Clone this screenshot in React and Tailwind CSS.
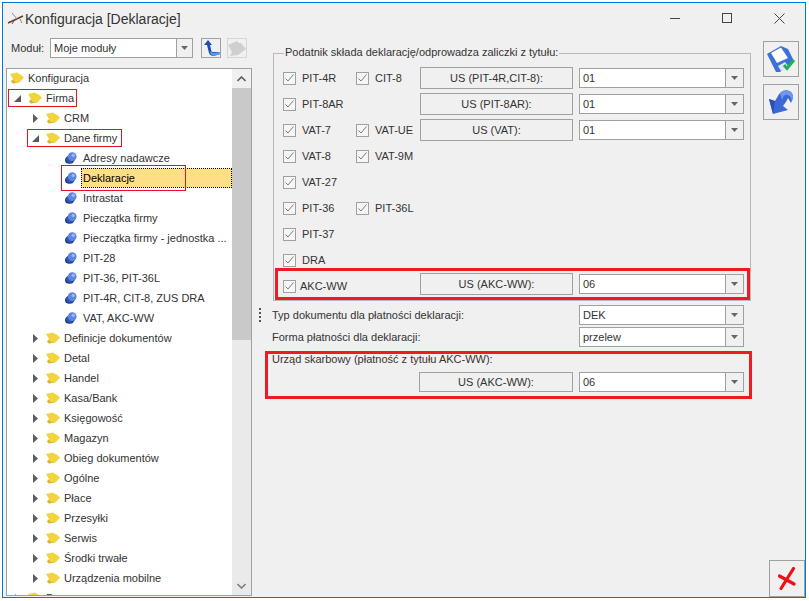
import React from 'react';

const font = { fontFamily: '"Liberation Sans", sans-serif' };

const Folder = () => (
  <svg width="14" height="12" viewBox="0 0 14 12" className="shrink-0">
    <path d="M0 2 L7 0.5 L9 2 L10 2 L14 5.5 L10 10 L3 11.5 L1 9.5 L3 7 Z" fill="#f2d53c" />
    <path d="M1 9.5 L3 7.5 L5 10 L10 10 L3 11.5 Z" fill="#d9b52c" />
  </svg>
);

const Leaf = () => (
  <svg width="12" height="12" viewBox="0 0 12 12" className="shrink-0">
    <ellipse cx="4.5" cy="8.2" rx="4.5" ry="3.6" fill="#1f3f8f" />
    <ellipse cx="5.5" cy="6.8" rx="4.5" ry="3.6" fill="#2f55b5" />
    <circle cx="7.2" cy="4.6" r="4.4" fill="#5c86e0" />
    <circle cx="8.2" cy="3.4" r="1.7" fill="#9db9f2" />
  </svg>
);

const Collapsed = () => (
  <svg width="5" height="9" viewBox="0 0 5 9" className="ml-[5px]">
    <path d="M0 0 L5 4.5 L0 9 Z" fill="#5f5f5f" />
  </svg>
);

const Expanded = () => (
  <svg width="7" height="7" viewBox="0 0 7 7" className="ml-[4px]">
    <path d="M7 0 L7 7 L0 7 Z" fill="#5a5a5a" />
  </svg>
);

const Caret = () => (
  <svg width="7" height="4" viewBox="0 0 7 4">
    <path d="M0 0 L7 0 L3.5 4 Z" fill="#666" />
  </svg>
);

const tree = [
  { label: 'Konfiguracja', pad: 'pl-[3px]', type: 'root' },
  { label: 'Firma', pad: 'pl-[3px]', type: 'open', mark: 'left-[1px] top-[1px] w-[69px] h-[18px]' },
  { label: 'CRM', pad: 'pl-[21px]', type: 'closed' },
  { label: 'Dane firmy', pad: 'pl-[21px]', type: 'open', mark: 'left-[20px] top-[1px] w-[95px] h-[18px]' },
  { label: 'Adresy nadawcze', type: 'leaf' },
  { label: 'Deklaracje', type: 'leaf', selected: true, mark: 'left-[54px] -top-[3px] w-[125px] h-[26px]' },
  { label: 'Intrastat', type: 'leaf' },
  { label: 'Pieczątka firmy', type: 'leaf' },
  { label: 'Pieczątka firmy - jednostka ...', type: 'leaf' },
  { label: 'PIT-28', type: 'leaf' },
  { label: 'PIT-36, PIT-36L', type: 'leaf' },
  { label: 'PIT-4R, CIT-8, ZUS DRA', type: 'leaf' },
  { label: 'VAT, AKC-WW', type: 'leaf' },
  { label: 'Definicje dokumentów', pad: 'pl-[21px]', type: 'closed' },
  { label: 'Detal', pad: 'pl-[21px]', type: 'closed' },
  { label: 'Handel', pad: 'pl-[21px]', type: 'closed' },
  { label: 'Kasa/Bank', pad: 'pl-[21px]', type: 'closed' },
  { label: 'Księgowość', pad: 'pl-[21px]', type: 'closed' },
  { label: 'Magazyn', pad: 'pl-[21px]', type: 'closed' },
  { label: 'Obieg dokumentów', pad: 'pl-[21px]', type: 'closed' },
  { label: 'Ogólne', pad: 'pl-[21px]', type: 'closed' },
  { label: 'Płace', pad: 'pl-[21px]', type: 'closed' },
  { label: 'Przesyłki', pad: 'pl-[21px]', type: 'closed' },
  { label: 'Serwis', pad: 'pl-[21px]', type: 'closed' },
  { label: 'Środki trwałe', pad: 'pl-[21px]', type: 'closed' },
  { label: 'Urządzenia mobilne', pad: 'pl-[21px]', type: 'closed' },
  { label: 'Program', pad: 'pl-[3px]', type: 'closed' },
];

const TreeRow = ({ row }) => {
  if (row.type === 'leaf') {
    return (
      <div className="relative flex h-5 items-center whitespace-nowrap pl-[58px]">
        <span className="w-[16px] shrink-0"><Leaf /></span>
        <span
          className={
            row.selected
              ? 'flex h-5 flex-1 items-center border border-dotted border-black bg-[#fddf85] pl-[1px] text-black'
              : 'pl-[2px]'
          }
        >
          {row.label}
        </span>
        {row.mark && <span className={`absolute border border-[#e81123] ${row.mark}`} />}
      </div>
    );
  }
  return (
    <div className={`relative flex h-5 items-center whitespace-nowrap ${row.pad}`}>
      {row.type !== 'root' && (
        <span className="flex w-[18px] shrink-0 items-center">
          {row.type === 'open' ? <Expanded /> : <Collapsed />}
        </span>
      )}
      <span className="w-[18px] shrink-0"><Folder /></span>
      <span>{row.label}</span>
      {row.mark && <span className={`absolute border border-[#e81123] ${row.mark}`} />}
    </div>
  );
};

const Combo = ({ value, className = 'h-5' }) => (
  <div className={`flex w-[165px] shrink-0 items-center border border-[#a0a0a0] bg-white ${className}`}>
    <span className="flex-1 pl-[3px]">{value}</span>
    <span className="flex h-full w-[18px] items-center justify-center border-l border-[#a0a0a0] bg-[#f0f0f0]">
      <Caret />
    </span>
  </div>
);

const Check = ({ label, className = 'w-[73px]', labelClass = 'ml-[6px]' }) => (
  <label className={`flex shrink-0 items-center ${className}`}>
    <span className="flex h-[13px] w-[13px] items-center justify-center border border-[#a0a0a0] bg-[#f6f6f6]">
      <svg width="9" height="8" viewBox="0 0 9 8">
        <path d="M0.5 4.5 L3 7 L8.5 0.5" fill="none" stroke="#7d7d7d" strokeWidth="1" />
      </svg>
    </span>
    <span className={labelClass}>{label}</span>
  </label>
);

const UsButton = ({ children, className = 'h-[22px] w-[153px]' }) => (
  <div className={`flex shrink-0 items-center justify-center border border-[#a0a0a0] bg-[#f0f0f0] ${className}`}>
    {children}
  </div>
);

const checkRows = [
  { a: 'PIT-4R', b: 'CIT-8', us: 'US (PIT-4R,CIT-8):', val: '01' },
  { a: 'PIT-8AR', us: 'US (PIT-8AR):', val: '01' },
  { a: 'VAT-7', b: 'VAT-UE', us: 'US (VAT):', val: '01' },
  { a: 'VAT-8', b: 'VAT-9M' },
  { a: 'VAT-27' },
  { a: 'PIT-36', b: 'PIT-36L' },
  { a: 'PIT-37' },
  { a: 'DRA' },
];

const SaveIcon = () => (
  <svg width="30" height="28" viewBox="0 0 30 28">
    <path d="M1 9 L15 1 L22 4 L28 16 L22 20 L14 27 L10 27 Z" fill="#3d6fd8" />
    <path d="M5 8 L15 2.5 L22 13 L11 18 Z" fill="#ffffff" />
    <path d="M12 21 L19 17 L22 21 L15 26 Z" fill="#dfe8f8" />
    <path d="M18 20 L21 23.5 L28 15" fill="none" stroke="#22b14c" strokeWidth="3" />
  </svg>
);

const UndoIcon = () => (
  <svg width="26" height="26" viewBox="0 0 26 26">
    <path d="M1 10 L5 25 L20 21 L15 17 C17 14 19 12 20 9 L23 14 C25 10 26 6 23 3 C19 0 15 1 12 4 C10 6 9 9 7 12 Z" fill="#3c68d6" />
    <path d="M12 4 C15 1 19 0 23 3 C25 5 26 8 24 12 C23 7 20 5 17 6 C15 7 15 9 14 11 Z" fill="#6f97ec" />
    <path d="M1 10 L5 25 L7 12 Z" fill="#2c50b0" />
  </svg>
);

const CancelIcon = () => (
  <svg width="18" height="23" viewBox="0 0 18 23">
    <path d="M1.5 9 L16 17 M15.5 1.5 L3 21.5" stroke="#ed1016" strokeWidth="3.2" strokeLinecap="round" fill="none" />
  </svg>
);

const BackIcon = () => (
  <svg width="17" height="17" viewBox="0 0 17 17">
    <path d="M5 0 L1 5 L4 5 L6 13 Q7 16 11 16 L17 14 L16 12 L10 12 Q8 12 8 9 L7 5 L9 5 Z" fill="#1d4fb3" />
    <path d="M8 11 Q9 13 11 13 L17 12 L17 14 L11 16 Q8 15 7 13 Z" fill="#5d9bef" />
  </svg>
);

const DisabledIcon = () => (
  <svg width="18" height="15" viewBox="0 0 18 15">
    <path d="M0 4 L9 0 L11 2 L13 2 L18 8 L10 14 L2 15 L4 11 Z" fill="#cfcfcf" />
  </svg>
);

const TitleIcon = () => (
  <svg width="17" height="14" viewBox="0 0 17 14" className="mt-[1px]">
    <path d="M1 11 L16 4" stroke="#6b3b2a" strokeWidth="1.6" />
    <path d="M5 1 L10 7 M13 7 L15 11" stroke="#8a8a8a" strokeWidth="1" />
    <path d="M5 12 L7 9" stroke="#555" strokeWidth="1" />
  </svg>
);

export default function App() {
  return (
    <div className="h-[601px] w-[809px] overflow-hidden bg-white pb-[3px] pl-[2px] pr-[3px] pt-[2px] text-[11px] leading-[12px] text-[#333]" style={font}>
      <div className="flex h-full flex-col border border-[#0078d7] bg-[#f0f0f0]">
        {/* Title bar */}
        <div className="flex h-[30px] shrink-0 items-center pl-[4px]">
          <TitleIcon />
          <span className="ml-[1px] mt-[1px] text-[14px] text-[#333]">Konfiguracja [Deklaracje]</span>
          <div className="ml-auto flex items-center">
            <span className="flex w-[52px] justify-center"><span className="h-px w-[10px] bg-[#444]" /></span>
            <span className="flex w-[52px] justify-center"><span className="h-[10px] w-[10px] border border-[#444]" /></span>
            <span className="flex w-[52px] justify-center">
              <svg width="11" height="11" viewBox="0 0 11 11">
                <path d="M0.5 0.5 L10.5 10.5 M10.5 0.5 L0.5 10.5" stroke="#444" strokeWidth="1" />
              </svg>
            </span>
          </div>
        </div>

        <div className="flex min-h-0 flex-1">
          {/* Left column */}
          <div className="flex w-[253px] shrink-0 flex-col pl-[3px] pr-[4px]">
            <div className="flex h-[35px] shrink-0 items-start pt-[5px]">
              <span className="ml-[5px] mt-[4px] w-[39px]">Moduł:</span>
              <div className="flex h-5 w-[143px] items-center border border-[#a0a0a0] bg-white">
                <span className="flex-1 pl-[3px]">Moje moduły</span>
                <span className="flex h-full w-[16px] items-center justify-center border-l border-[#a0a0a0] bg-[#f0f0f0]"><Caret /></span>
              </div>
              <span className="ml-[8px] flex h-5 w-5 items-center justify-center border border-[#a0a0a0]"><BackIcon /></span>
              <span className="ml-[6px] flex h-5 w-5 items-center justify-center border border-[#d5d5d5]"><DisabledIcon /></span>
            </div>
            <div className="mb-[1px] flex min-h-0 flex-1 border border-[#a0a0a0] bg-white">
              <div className="min-w-0 flex-1 overflow-hidden">
                <div className="-mt-[1px]">
                  {tree.map((row) => <TreeRow key={row.label} row={row} />)}
                </div>
              </div>
              <div className="flex w-[19px] shrink-0 flex-col bg-[#eaeaea]">
                <span className="flex h-[19px] shrink-0 items-center justify-center bg-[#f0f0f0]">
                  <svg width="9" height="6" viewBox="0 0 9 6"><path d="M0.5 5 L4.5 1 L8.5 5" fill="none" stroke="#606060" strokeWidth="1.6" /></svg>
                </span>
                <span className="h-[252px] shrink-0 bg-[#c9c9c9]" />
                <span className="mt-auto flex h-[19px] shrink-0 items-center justify-center">
                  <svg width="9" height="6" viewBox="0 0 9 6"><path d="M0.5 1 L4.5 5 L8.5 1" fill="none" stroke="#808080" strokeWidth="1.6" /></svg>
                </span>
              </div>
            </div>
          </div>

          {/* Right panel */}
          <div className="flex w-[507px] shrink-0 flex-col">
            <fieldset className="ml-[17px] mt-[12px] w-[478px] border border-[#b9b9b9] pt-[4px]">
              <legend className="ml-[10px] h-4 px-[1px] leading-[14px]">Podatnik składa deklarację/odprowadza zaliczki z tytułu:</legend>
              {checkRows.map((r) => (
                <div key={r.a} className="flex h-[26px] items-center pl-[9px]">
                  <Check label={r.a} />
                  {r.b ? <Check label={r.b} className="w-[64px]" /> : <span className="w-[64px] shrink-0" />}
                  {r.us && <UsButton>{r.us}</UsButton>}
                  {r.val && <div className="ml-[6px]"><Combo value={r.val} /></div>}
                </div>
              ))}
              <div className="-mt-[5px] ml-[1px] flex h-[32px] w-[475px] items-center border-[3px] border-[#ed1c24] pl-[5px]">
                <Check label="AKC-WW" className="w-[137px] pt-[4px]" labelClass="ml-[4px]" />
                <UsButton>US (AKC-WW):</UsButton>
                <div className="ml-[6px]"><Combo value="06" /></div>
              </div>
            </fieldset>

            <div className="mt-[4px] flex h-[20px] items-center pl-[3px]">
              <span className="flex h-[15px] w-[3px] flex-col justify-between">
                <i className="h-[2px] w-[2px] bg-[#555]" />
                <i className="h-[2px] w-[2px] bg-[#555]" />
                <i className="h-[2px] w-[2px] bg-[#555]" />
                <i className="h-[2px] w-[2px] bg-[#555]" />
              </span>
              <span className="ml-[10px] w-[307px]">Typ dokumentu dla płatności deklaracji:</span>
              <Combo value="DEK" />
            </div>
            <div className="mt-[2px] flex h-[20px] items-center pl-[16px]">
              <span className="w-[307px]">Forma płatności dla deklaracji:</span>
              <Combo value="przelew" />
            </div>
            <div className="ml-[9px] mt-[4px] h-[48px] w-[487px] border-[3px] border-[#ed1c24] pl-[4px]">
              <div className="-mt-[1px] h-[19px]">Urząd skarbowy (płatność z tytułu AKC-WW):</div>
              <div className="flex items-center pl-[147px]">
                <UsButton className="h-5 w-[154px]">US (AKC-WW):</UsButton>
                <div className="ml-[6px]"><Combo value="06" /></div>
              </div>
            </div>
          </div>

          {/* Action buttons */}
          <div className="flex flex-1 flex-col pt-[8px]">
            <span className="flex h-[36px] w-[36px] items-center justify-center border border-[#a0a0a0]"><SaveIcon /></span>
            <span className="mt-[7px] flex h-[36px] w-[36px] items-center justify-center border border-[#a0a0a0]"><UndoIcon /></span>
            <span className="mt-auto flex h-[37px] w-[36px] items-center justify-center self-end border border-[#a0a0a0]"><CancelIcon /></span>
          </div>
        </div>
      </div>
    </div>
  );
}
